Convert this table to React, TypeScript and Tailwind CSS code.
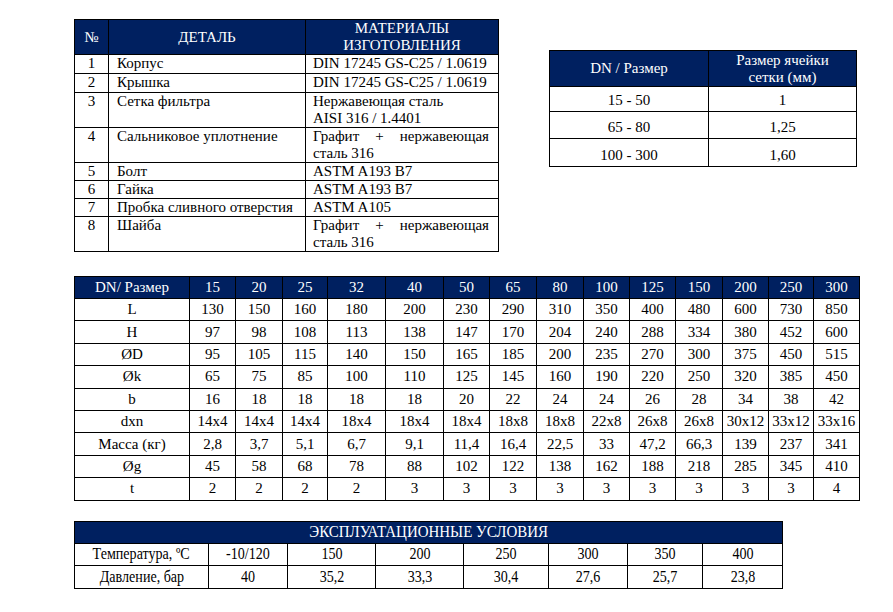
import React from 'react'

const NAVY = 'bg-[#002060]'

const parts: [string, string, React.ReactNode, boolean][] = [
  ['1', 'Корпус', 'DIN 17245 GS-C25 / 1.0619', false],
  ['2', 'Крышка', 'DIN 17245 GS-C25 / 1.0619', false],
  ['3', 'Сетка фильтра', <>Нержавеющая сталь<br />AISI 316 / 1.4401</>, false],
  ['4', 'Сальниковое уплотнение', 'Графит + нержавеющая сталь 316', true],
  ['5', 'Болт', 'ASTM A193 B7', false],
  ['6', 'Гайка', 'ASTM A193 B7', false],
  ['7', 'Пробка сливного отверстия', 'ASTM A105', false],
  ['8', 'Шайба', 'Графит + нержавеющая сталь 316', true],
]

const mesh = [
  ['15 - 50', '1', 'h-[25px]'],
  ['65 - 80', '1,25', 'h-[27px]'],
  ['100 - 300', '1,60', 'h-[28px]'],
]

const dnCols = [
  'w-[115px]', 'w-[46px]', 'w-[47px]', 'w-[45px]', 'w-[58px]', 'w-[58px]', 'w-[46px]', 'w-[47px]',
  'w-[47px]', 'w-[46px]', 'w-[46px]', 'w-[47px]', 'w-[46px]', 'w-[45px]', 'w-[46px]',
]
const dnHead = ['DN/ Размер', '15', '20', '25', '32', '40', '50', '65', '80', '100', '125', '150', '200', '250', '300']
const dims: string[][] = [
  ['L', '130', '150', '160', '180', '200', '230', '290', '310', '350', '400', '480', '600', '730', '850'],
  ['H', '97', '98', '108', '113', '138', '147', '170', '204', '240', '288', '334', '380', '452', '600'],
  ['ØD', '95', '105', '115', '140', '150', '165', '185', '200', '235', '270', '300', '375', '450', '515'],
  ['Øk', '65', '75', '85', '100', '110', '125', '145', '160', '190', '220', '250', '320', '385', '450'],
  ['b', '16', '18', '18', '18', '18', '20', '22', '24', '24', '26', '28', '34', '38', '42'],
  ['dxn', '14x4', '14x4', '14x4', '18x4', '18x4', '18x4', '18x8', '18x8', '22x8', '26x8', '26x8', '30x12', '33x12', '33x16'],
  ['Масса (кг)', '2,8', '3,7', '5,1', '6,7', '9,1', '11,4', '16,4', '22,5', '33', '47,2', '66,3', '139', '237', '341'],
  ['Øg', '45', '58', '68', '78', '88', '102', '122', '138', '162', '188', '218', '285', '345', '410'],
  ['t', '2', '2', '2', '2', '3', '3', '3', '3', '3', '3', '3', '3', '3', '4'],
]

const condCols = ['w-[134px]', 'w-[79px]', 'w-[88px]', 'w-[88px]', 'w-[85px]', 'w-[79px]', 'w-[75px]', 'w-[80px]']
const cond = [
  ['Температура, ºC', '-10/120', '150', '200', '250', '300', '350', '400'],
  ['Давление, бар', '40', '35,2', '33,3', '30,4', '27,6', '25,7', '23,8'],
]

// narrow-looking text of the last table
function Narrow({ children }: { children: React.ReactNode }) {
  return <span className="inline-block scale-x-[0.88] whitespace-nowrap">{children}</span>
}

export default function App() {
  return (
    <div className="min-h-screen w-full bg-white font-[family-name:'Liberation_Serif','Times_New_Roman',serif] text-black">
      <div className="flex flex-col pl-[74px] pt-[19px]">
        <div className="flex items-start">
          <table className="w-[424px] table-fixed border-collapse text-[15px] leading-[17px]">
            <colgroup>
              <col className="w-[34px]" />
              <col className="w-[197px]" />
              <col className="w-[193px]" />
            </colgroup>
            <thead>
              <tr className={`${NAVY} h-[35px] text-white`}>
                <th className="border border-black font-normal">№</th>
                <th className="border border-black font-normal">ДЕТАЛЬ</th>
                <th className="border border-black font-normal">
                  МАТЕРИАЛЫ
                  <br />
                  ИЗГОТОВЛЕНИЯ
                </th>
              </tr>
            </thead>
            <tbody>
              {parts.map(([n, name, mat, just]) => (
                <tr key={n} className={`align-top ${n === '1' || n === '2' ? 'h-[19px]' : ''}`}>
                  <td className="border border-black text-center">{n}</td>
                  <td className="border border-black pl-[8px] whitespace-nowrap">{name}</td>
                  <td className={`border border-black pl-[7px] pr-[9px] ${just ? 'text-justify' : ''}`}>{mat}</td>
                </tr>
              ))}
            </tbody>
          </table>

          <table className="ml-[50px] mt-[31px] w-[307px] table-fixed border-collapse text-[15px] leading-[17px]">
            <colgroup>
              <col className="w-[159px]" />
              <col className="w-[148px]" />
            </colgroup>
            <thead>
              <tr className={`${NAVY} h-[36px] text-white`}>
                <th className="border border-black font-normal">DN / Размер</th>
                <th className="border border-black font-normal">
                  Размер ячейки
                  <br />
                  сетки (мм)
                </th>
              </tr>
            </thead>
            <tbody>
              {mesh.map(([dn, size, h]) => (
                <tr key={dn} className={`${h} align-bottom`}>
                  <td className="border border-black pb-[2px] text-center">{dn}</td>
                  <td className="border border-black pb-[2px] text-center">{size}</td>
                </tr>
              ))}
            </tbody>
          </table>
        </div>

        <table className="mt-[24px] w-[786px] table-fixed border-collapse text-[15px] leading-[17px]">
          <colgroup>
            {dnCols.map((w, i) => (
              <col key={i} className={w} />
            ))}
          </colgroup>
          <thead>
            <tr className={`${NAVY} h-[22px] text-white`}>
              {dnHead.map((h) => (
                <th key={h} className="border border-black p-0 font-normal whitespace-nowrap">
                  {h}
                </th>
              ))}
            </tr>
          </thead>
          <tbody>
            {dims.map((row) => (
              <tr key={row[0]} className="h-[22.4px]">
                {row.map((v, i) => (
                  <td key={i} className="border border-black p-0 text-center whitespace-nowrap">
                    {v}
                  </td>
                ))}
              </tr>
            ))}
          </tbody>
        </table>

        <table className="mt-[20px] w-[709px] table-fixed border-collapse text-[16px] leading-[18px]">
          <colgroup>
            {condCols.map((w, i) => (
              <col key={i} className={w} />
            ))}
          </colgroup>
          <thead>
            <tr className={`${NAVY} h-[22px] text-white`}>
              <th colSpan={8} className="border border-black p-0 text-[17px] font-normal">
                <Narrow>ЭКСПЛУАТАЦИОННЫЕ УСЛОВИЯ</Narrow>
              </th>
            </tr>
          </thead>
          <tbody>
            {cond.map((row, r) => (
              <tr key={row[0]} className={r === 0 ? 'h-[22px]' : 'h-[23px]'}>
                {row.map((v, i) => (
                  <td key={i} className="border border-black p-0 text-center">
                    <Narrow>{v}</Narrow>
                  </td>
                ))}
              </tr>
            ))}
          </tbody>
        </table>
      </div>
    </div>
  )
}
